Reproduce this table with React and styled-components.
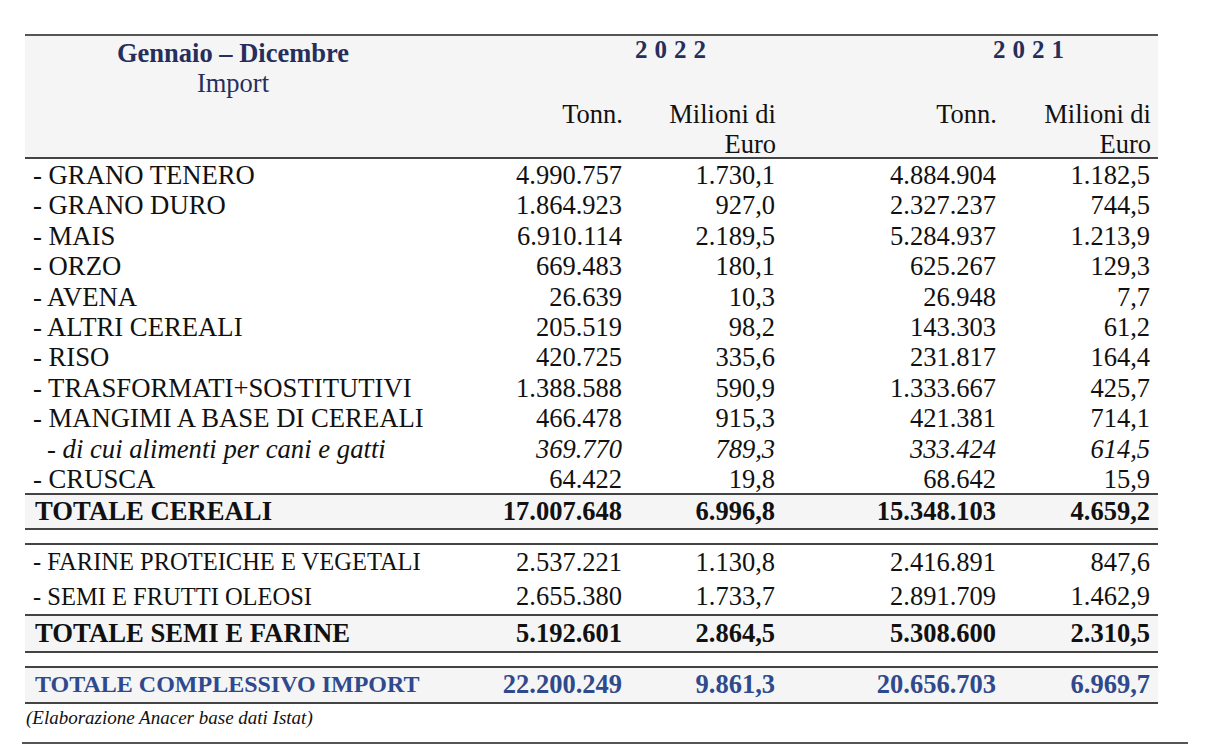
import React from "react";
import styled, { createGlobalStyle } from "styled-components";

const GlobalStyle = createGlobalStyle`
  *, *::before, *::after {
    box-sizing: border-box;
  }
  body {
    margin: 0;
    background: #ffffff;
    font-family: "Liberation Serif", "Times New Roman", serif;
    color: #111;
  }
`;

const COLS = "416px 189px 153px 37px 184px 154px";
const NAVY = "#262f5c";
const BLUE = "#2f4a8c";
const RULE = "2px solid #444";

const Page = styled.div`
  padding: 34px 0 0 22px;
  width: 1188px;
`;

const Table = styled.div`
  width: 1133px;
  margin-left: 3px;
`;

const Header = styled.div`
  display: grid;
  grid-template-columns: ${COLS};
  grid-template-rows: repeat(4, 30px);
  height: 125px;
  padding-top: 1px;
  background: #f5f5f6;
  border-top: 2px solid #555;
  border-bottom: ${RULE};
  font-size: 26.5px;
  line-height: 30px;
`;

const Title = styled.div`
  grid-column: 1;
  grid-row: 1 / span 2;
  text-align: center;
  color: ${NAVY};
  padding-top: 1px;

  strong {
    display: block;
    font-weight: 700;
  }
`;

const Year = styled.div`
  grid-row: 1;
  grid-column: ${(p) => p.$col};
  text-align: right;
  padding-right: ${(p) => p.$pr}px;
  color: ${NAVY};
  font-weight: 700;
  font-size: 25px;
  letter-spacing: 7px;
  margin-top: -2px;
`;

const SubHead = styled.div`
  grid-row: 3 / span 2;
  grid-column: ${(p) => p.$col};
  text-align: right;
  padding: 2px 7px 0 0;
`;

const Group = styled.div`
  border-top: ${(p) => (p.$ruled ? RULE : "none")};
`;

const Row = styled.div`
  display: grid;
  grid-template-columns: ${COLS};
  height: ${(p) => p.$h}px;
  padding-top: ${(p) => p.$pt || 0}px;
  align-items: center;
  font-size: 26.5px;
  font-style: ${(p) => (p.$italic ? "italic" : "normal")};
`;

const TotalRow = styled(Row)`
  font-weight: 700;
  background: #f5f5f6;
  border-top: ${RULE};
  border-bottom: ${RULE};
  color: ${(p) => (p.$grand ? BLUE : "#111")};
`;

const Label = styled.div`
  padding-left: ${(p) => p.$indent}px;
  font-size: ${(p) => p.$size || 26.7}px;
  white-space: nowrap;
`;

const Num = styled.div`
  text-align: right;
  padding-right: 8px;
`;

const Gap = styled.div`
  height: 13px;
`;

const Caption = styled.div`
  font-size: 19px;
  font-style: italic;
  line-height: 28px;
  height: 38px;
  padding-left: 1px;
`;

const BottomRule = styled.div`
  width: 1166px;
  border-top: 2px solid #555;
`;

const cereals = [
  ["- GRANO TENERO", "4.990.757", "1.730,1", "4.884.904", "1.182,5"],
  ["- GRANO DURO", "1.864.923", "927,0", "2.327.237", "744,5"],
  ["- MAIS", "6.910.114", "2.189,5", "5.284.937", "1.213,9"],
  ["- ORZO", "669.483", "180,1", "625.267", "129,3"],
  ["- AVENA", "26.639", "10,3", "26.948", "7,7"],
  ["- ALTRI CEREALI", "205.519", "98,2", "143.303", "61,2"],
  ["- RISO", "420.725", "335,6", "231.817", "164,4"],
  ["- TRASFORMATI+SOSTITUTIVI", "1.388.588", "590,9", "1.333.667", "425,7"],
  ["- MANGIMI A BASE DI CEREALI", "466.478", "915,3", "421.381", "714,1"],
  ["- di cui alimenti per cani e gatti", "369.770", "789,3", "333.424", "614,5", true],
  ["- CRUSCA", "64.422", "19,8", "68.642", "15,9"],
];

const seeds = [
  ["- FARINE PROTEICHE E VEGETALI", "2.537.221", "1.130,8", "2.416.891", "847,6"],
  ["- SEMI E FRUTTI OLEOSI", "2.655.380", "1.733,7", "2.891.709", "1.462,9"],
];

const Cells = ({ values }) => (
  <>
    <Num>{values[0]}</Num>
    <Num>{values[1]}</Num>
    <span />
    <Num>{values[2]}</Num>
    <Num>{values[3]}</Num>
  </>
);

const App = () => (
  <Page>
    <GlobalStyle />
    <Table>
      <Header>
        <Title>
          <strong>Gennaio – Dicembre</strong>
          Import
        </Title>
        <Year $col="2 / span 2" $pr={70}>2022</Year>
        <Year $col="5 / span 2" $pr={87}>2021</Year>
        <SubHead $col={2}>Tonn.</SubHead>
        <SubHead $col={3}>
          Milioni di
          <br />
          Euro
        </SubHead>
        <SubHead $col={5}>Tonn.</SubHead>
        <SubHead $col={6}>
          Milioni di
          <br />
          Euro
        </SubHead>
      </Header>

      <Group>
        {cereals.map(([label, ...vals]) => (
          <Row key={label} $h={30.4} $pt={1} $italic={vals[4]}>
            <Label $indent={vals[4] ? 22 : 8}>{label}</Label>
            <Cells values={vals} />
          </Row>
        ))}
      </Group>
      <TotalRow $h={36.5}>
        <Label $indent={10}>TOTALE CEREALI</Label>
        <Cells values={["17.007.648", "6.996,8", "15.348.103", "4.659,2"]} />
      </TotalRow>

      <Gap />
      <Group $ruled>
        {seeds.map(([label, ...vals]) => (
          <Row key={label} $h={34.5}>
            <Label $indent={8} $size={24.5}>{label}</Label>
            <Cells values={vals} />
          </Row>
        ))}
      </Group>
      <TotalRow $h={39}>
        <Label $indent={10}>TOTALE SEMI E FARINE</Label>
        <Cells values={["5.192.601", "2.864,5", "5.308.600", "2.310,5"]} />
      </TotalRow>

      <Gap />
      <TotalRow $h={38} $grand>
        <Label $indent={10} $size={24}>TOTALE COMPLESSIVO IMPORT</Label>
        <Cells values={["22.200.249", "9.861,3", "20.656.703", "6.969,7"]} />
      </TotalRow>
      <Caption>(Elaborazione Anacer base dati Istat)</Caption>
    </Table>
    <BottomRule />
  </Page>
);

export default App;
